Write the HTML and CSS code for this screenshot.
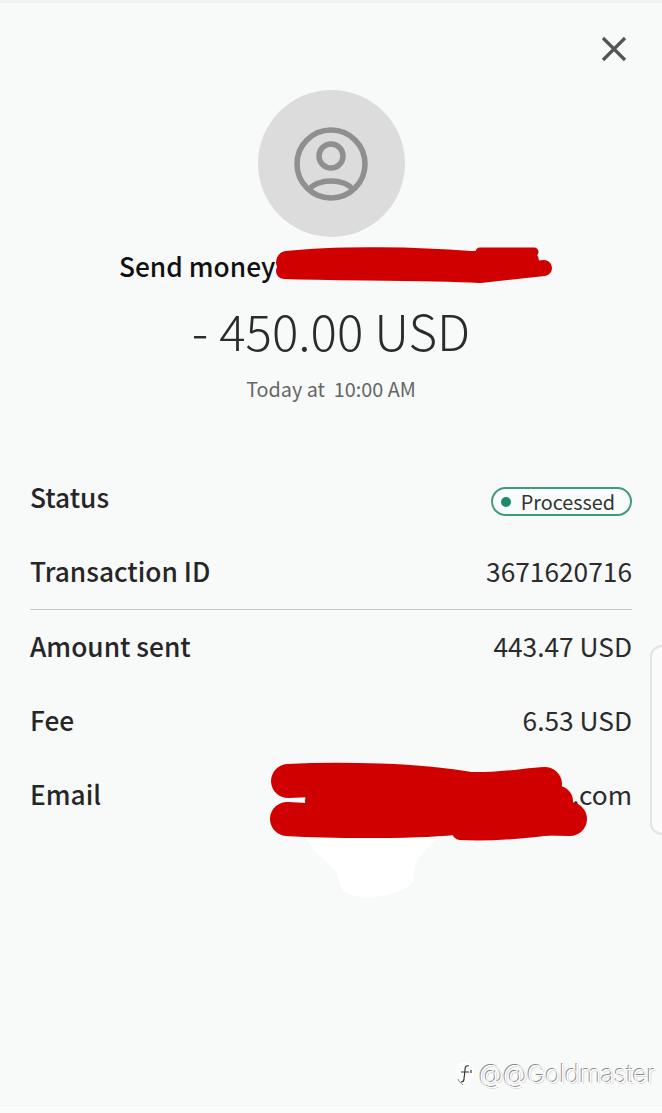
FILE: index.html
```html
<!DOCTYPE html>
<html lang="en">
<head>
    <meta charset="UTF-8" />
    <meta name="viewport" content="width=device-width, initial-scale=1.0" />
    <title>Transaction details</title>
    <link rel="stylesheet" href="styles.css">
</head>
<body>
  <main class="tela">
    <div class="topo">
      <svg class="fechar" viewBox="0 0 26 26" width="26" height="26">
        <path d="M2 2 L24 24 M24 2 L2 24" fill="none" stroke="#555" stroke-width="3.2" />
      </svg>
    </div>

    <div class="avatar">
      <svg viewBox="0 0 74 74" width="74" height="74">
        <circle cx="37" cy="37" r="34" fill="none" stroke="#8f8f8f" stroke-width="5.5" />
        <circle cx="37" cy="29" r="12" fill="none" stroke="#8f8f8f" stroke-width="5.5" />
        <path d="M15 63 C22 51 52 51 59 63" fill="none" stroke="#8f8f8f" stroke-width="5.5" />
      </svg>
    </div>

    <h2 class="titulo">Send money</h2>
    <div class="valor">- 450.00 USD</div>
    <p class="data">Today at&nbsp; 10:00 AM</p>

    <section class="lista">
      <div class="linha">
        <span class="rotulo">Status</span>
        <span class="selo"><i class="ponto"></i>Processed</span>
      </div>
      <div class="linha">
        <span class="rotulo">Transaction ID</span>
        <span class="dado">3671620716</span>
      </div>
      <hr class="divisor" />
      <div class="linha">
        <span class="rotulo">Amount sent</span>
        <span class="dado">443.47 USD</span>
      </div>
      <div class="linha">
        <span class="rotulo">Fee</span>
        <span class="dado">6.53 USD</span>
      </div>
      <div class="linha">
        <span class="rotulo">Email</span>
        <span class="dado">.com</span>
      </div>
    </section>

    <div class="alca"></div>

    <div class="marca">
      <svg viewBox="0 0 20 28" width="20" height="28">
        <path d="M10 2 C16 2 19 6 19 12 C19 18 15 22 8 25 L8 22 C3 20 1 16 1 12 C1 6 4 2 10 2 Z" fill="#fff" />
        <path d="M14 6 C11 5 10 7 10 10 L9 19 C9 21 8 22 6 22 M6 12 L14 12 M16 10 L16 13" fill="none" stroke="#333" stroke-width="1.2" />
        <path d="M3 19 C4 22 6 23 8 25" fill="none" stroke="#888" stroke-width="1" />
      </svg>
      <span>@@Goldmaster</span>
    </div>

    <div class="rodape"></div>
  </main>

  <!-- riscos de tinta por cima do nome e do email -->
  <svg class="tinta" viewBox="0 0 662 1113" width="662" height="1113">
    <path class="branco" d="M304 836 L440 836 C425 850 414 860 414 872 C414 882 412 888 395 892 C375 899 360 900 345 892 C338 886 340 878 335 870 C325 860 312 850 304 836 Z" />
    <g class="vermelho">
      <path stroke-width="22" d="M287 262 C340 256 420 258 470 262 L528 261" />
      <path stroke-width="16" d="M284 271 C340 273 420 272 480 275 L544 268" />
      <path stroke-width="9" d="M480 252 L534 252" />
      <path stroke-width="34" d="M288 781 C340 778 420 780 470 789 C500 790 525 785 545 784" />
      <path stroke-width="34" d="M287 819 C340 822 420 822 462 817 L570 819" />
      <path stroke-width="16" d="M460 832 C500 834 540 829 572 824" />
      <path stroke-width="30" d="M320 801 L558 801" />
    </g>
  </svg>
</body>
</html>
```

FILE: styles.css
```css
* {
    box-sizing: border-box;
}

body {
    margin: 0;
    background: #f8f9f9;
    font-family: "Noto Sans CJK SC", "Noto Sans", sans-serif;
    color: #222;
    overflow: hidden;
}

.tela {
    position: relative;
    display: flex;
    flex-direction: column;
    align-items: center;
    height: 1113px;
    padding: 0 30px;
    border-top: 3px solid #f1f1f1;
}

.topo {
    display: flex;
    justify-content: flex-end;
    width: 100%;
    padding: 33px 5px 0 0;
}

.avatar {
    display: flex;
    align-items: center;
    justify-content: center;
    width: 147px;
    height: 147px;
    margin-top: 28px;
    border-radius: 50%;
    background: #dcdcdc;
}

.titulo {
    align-self: flex-start;
    margin: 9px 0 0 89px;
    font-size: 26.3px;
    line-height: 40px;
    font-weight: 500;
    color: #111;
}

.valor {
    margin-top: 12px;
    font-size: 49.3px;
    line-height: 64px;
    font-weight: 300;
    color: #2b2b2b;
}

.data {
    margin: 13px 0 0;
    font-size: 19.8px;
    line-height: 28px;
    color: #666;
}

.lista {
    width: 100%;
    margin-top: 57px;
}

.linha {
    display: flex;
    align-items: center;
    justify-content: space-between;
    height: 74px;
}

.rotulo {
    font-size: 26.3px;
    line-height: 36px;
    font-weight: 500;
    color: #262626;
}

.dado {
    font-size: 26.3px;
    line-height: 36px;
    color: #2b2b2b;
}

.selo {
    display: flex;
    align-items: center;
    height: 29px;
    margin-top: 9px;
    padding: 0 15px 0 8px;
    border: 2px solid #3f9a80;
    border-radius: 15px;
    font-size: 19.8px;
    color: #333;
    background: #f8fdfb;
}

.ponto {
    width: 10px;
    height: 10px;
    margin-right: 10px;
    border-radius: 50%;
    background: #1f8a6a;
}

.divisor {
    height: 1px;
    margin: 1px 0 -1px;
    border: 0;
    background: #c9c9c9;
}

/* pegador lateral encostado na borda direita */
.alca {
    position: absolute;
    top: 642px;
    right: 0;
    width: 12px;
    height: 190px;
    border: 2px solid #e4e4e4;
    border-right: 0;
    border-radius: 12px 0 0 12px;
    background: #fbfbfb;
}

.marca {
    position: absolute;
    right: 7px;
    bottom: 24px;
    display: flex;
    align-items: center;
    gap: 4px;
    font-family: "Inter", sans-serif;
    font-size: 25px;
    font-weight: 200;
    letter-spacing: -0.3px;
    color: #fff;
    text-shadow: -1px -1px 0 #888, 1px 1px 0 #ddd;
}

.rodape {
    position: absolute;
    left: 0;
    bottom: 0;
    width: 100%;
    height: 8px;
    border-top: 1px solid #f2f3f3;
    background: #fafbfb;
}

.tinta {
    position: absolute;
    top: 0;
    left: 0;
    pointer-events: none;
}

.vermelho {
    fill: none;
    stroke: #d00000;
    stroke-linecap: round;
    stroke-linejoin: round;
}

.branco {
    fill: #fff;
}
```
